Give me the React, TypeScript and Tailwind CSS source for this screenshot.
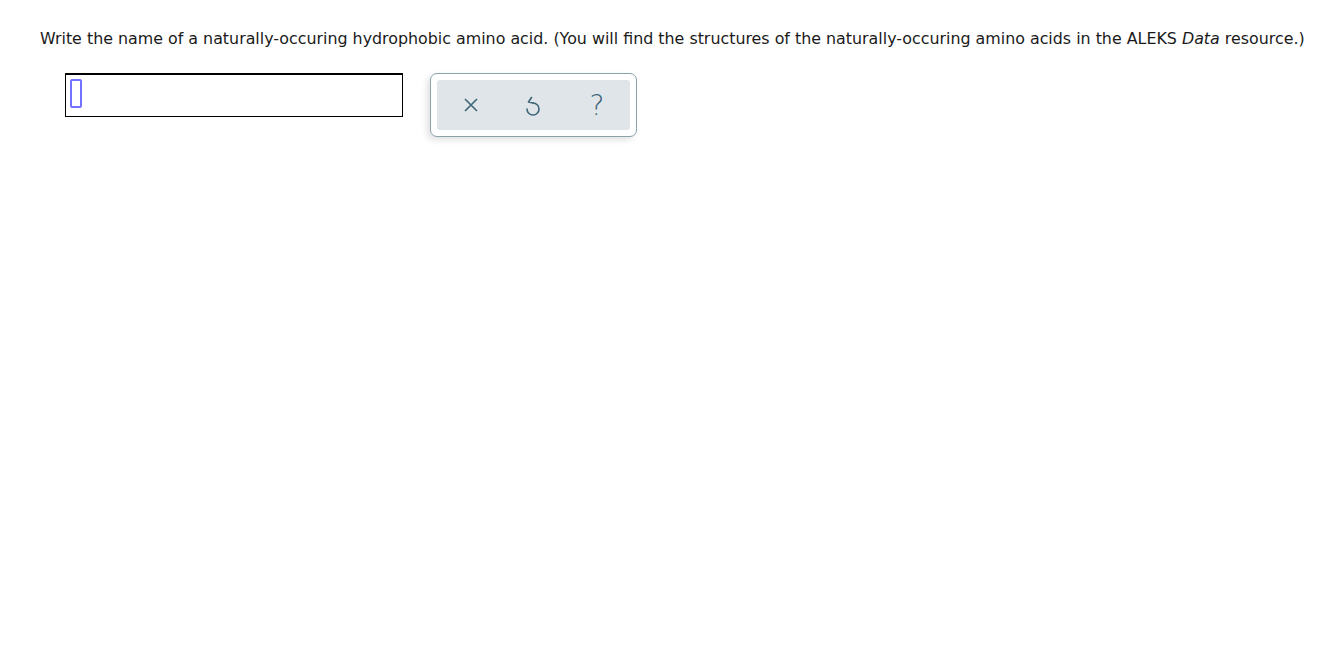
export default function App() {
  return (
    <div className="min-h-[663px] bg-white" style={{ fontFamily: '"DejaVu Sans", Verdana, sans-serif' }}>
      <div className="pl-[40px] pt-[29px] text-[15.86px] leading-[20px] text-[#1a1a1a]">
        Write the name of a naturally-occuring hydrophobic amino acid. (You will find the structures of the naturally-occuring amino acids in the ALEKS <i>Data</i> resource.)
      </div>
      <div className="flex items-start pl-[65px] pt-[24px]">
        <div className="w-[338px] h-[44px] border border-t-2 border-black bg-white pl-[4px] pt-[4px]">
          <div className="w-[12px] h-[29px] border-2 border-[#7373ff] rounded-[2px]" />
        </div>
        <div className="ml-[27px] rounded-[7px] border border-[#8aa3ad] bg-white p-[6px] shadow-[-3px_3px_6px_rgba(0,0,0,0.12)]">
          <div className="flex w-[193px] h-[50px] items-center rounded-[3px] bg-[#dfe5e8] text-[#3d6678]">
            <div className="w-[64px] flex justify-center pl-[3px]">
              <svg width="14" height="14" viewBox="0 0 14 14" fill="none" stroke="currentColor" strokeWidth="1.6">
                <path d="M1 1 L13 13 M13 1 L1 13" />
              </svg>
            </div>
            <div className="w-[64px] flex justify-center pt-[2px]">
              <svg width="14" height="20" viewBox="0 0 14 20" fill="none" stroke="currentColor" strokeWidth="1.6" strokeLinecap="round" strokeLinejoin="round">
                <path d="M7 7 A6 6 0 1 1 1 13" />
                <path d="M5.5 1.5 L2.5 6 L7 7" />
              </svg>
            </div>
            <div className="w-[64px] flex justify-center text-[28px] leading-none font-extralight pt-[2px]" style={{ fontFamily: '"DejaVu Sans", sans-serif' }}>
              ?
            </div>
          </div>
        </div>
      </div>
    </div>
  );
}
